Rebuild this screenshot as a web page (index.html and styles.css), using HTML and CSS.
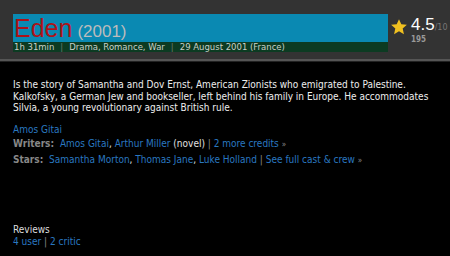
FILE: index.html
```html
<!DOCTYPE html>
<html>
<head>
<meta charset="utf-8">
<link rel="stylesheet" href="styles.css">
</head>
<body>
<header class="top">
  <div class="title-col">
    <div class="title-box">
      <span class="name">Eden</span>
      <span class="year">(2001)</span>
    </div>
    <div class="info-bar">
      <span>1h 31min</span><span class="sep">|</span><span>Drama, Romance, War</span><span class="sep">|</span><span>29 August 2001 (France)</span>
    </div>
  </div>
  <div class="rating">
    <svg class="star" viewBox="0 0 24 24" width="18" height="18"><path d="M12 1.5l3.1 6.9 7.4.7-5.6 5 1.7 7.4L12 17.6l-6.6 3.9 1.7-7.4-5.6-5 7.4-.7z" fill="#f0c020"/></svg>
    <div class="score">
      <div class="value"><span class="big">4.5</span><span class="out">/10</span></div>
      <div class="votes">195</div>
    </div>
  </div>
</header>
<main class="content">
  <p class="plot">Is the story of Samantha and Dov Ernst, American Zionists who emigrated to Palestine. Kalkofsky, a German Jew and bookseller, left behind his family in Europe. He accommodates Silvia, a young revolutionary against British rule.</p>
  <div class="credits">
    <div class="credit"><a class="link">Amos Gitai</a></div>
    <div class="credit"><span class="label">Writers:</span> <a class="link">Amos Gitai</a>, <a class="link">Arthur Miller</a> <span class="note">(novel)</span> <span class="pipe">|</span> <a class="link">2 more credits</a> <span class="raquo">»</span></div>
    <div class="credit"><span class="label">Stars:</span> <a class="link">Samantha Morton</a>, <a class="link">Thomas Jane</a>, <a class="link">Luke Holland</a> <span class="pipe">|</span> <a class="link">See full cast &amp; crew</a> <span class="raquo">»</span></div>
  </div>
  <div class="reviews">
    <div class="reviews-title">Reviews</div>
    <div><a class="link">4 user</a> <span class="pipe">|</span> <a class="link">2 critic</a></div>
  </div>
</main>
</body>
</html>
```
FILE: styles.css
```css
html, body {
  margin: 0;
  padding: 0;
  background: #000;
}
body {
  width: 450px;
  height: 256px;
  overflow: hidden;
  font-family: "DejaVu Sans Condensed", "DejaVu Sans", sans-serif;
  color: #e6e6e6;
}
.top {
  background: #333;
  height: 61px;
  box-sizing: border-box;
  padding: 14px 0 0 13px;
  display: flex;
  align-items: flex-start;
  border-bottom: 2px solid #555;
  box-shadow: 0 1px 0 #222;
}
.title-col {
  width: 375px;
}
.title-box {
  background: #0a89b2;
  height: 28px;
  display: flex;
  align-items: baseline;
  padding-left: 1px;
  font-family: "Liberation Sans", Arial, sans-serif;
  line-height: 28px;
}
.name {
  color: #ad1218;
  font-size: 25px;
}
.year {
  color: #bcbcbc;
  font-size: 17px;
  margin-left: 5px;
}
.info-bar {
  background: #0c3b22;
  height: 10px;
  line-height: 10px;
  font-family: "DejaVu Sans", sans-serif;
  font-size: 8.5px;
  color: #c8d0c8;
  padding-left: 1px;
  white-space: nowrap;
  overflow: hidden;
}
.sep {
  color: #6a7a6e;
  margin: 0 6px;
}
.rating {
  display: flex;
  align-items: flex-start;
  margin-left: 2px;
  padding-top: 4px;
}
.star {
  display: block;
}
.score {
  margin-left: 3px;
  margin-top: -1px;
}
.value {
  line-height: 16px;
  white-space: nowrap;
  font-family: "Liberation Sans", Arial, sans-serif;
}
.big {
  color: #fff;
  font-size: 17px;
}
.out {
  color: #777;
  font-size: 8px;
  font-family: "DejaVu Sans", sans-serif;
}
.votes {
  color: #999;
  font-size: 8px;
  line-height: 8px;
  font-weight: bold;
}
.content {
  padding: 18px 13px 0 13px;
  font-size: 10px;
}
.plot {
  margin: 0;
  line-height: 11.5px;
  color: #eee;
}
.credits {
  margin-top: 9px;
  line-height: 14.5px;
}
.link {
  color: #2a78c0;
  text-decoration: none;
}
.label {
  color: #888;
  font-weight: bold;
  margin-right: 3px;
}
.note {
  color: #e0e0e0;
}
.pipe {
  color: #888;
}
.raquo {
  color: #888;
  font-size: 8px;
}
.reviews {
  margin-top: 56px;
  line-height: 12px;
}
.reviews-title {
  color: #ddd;
}
```
